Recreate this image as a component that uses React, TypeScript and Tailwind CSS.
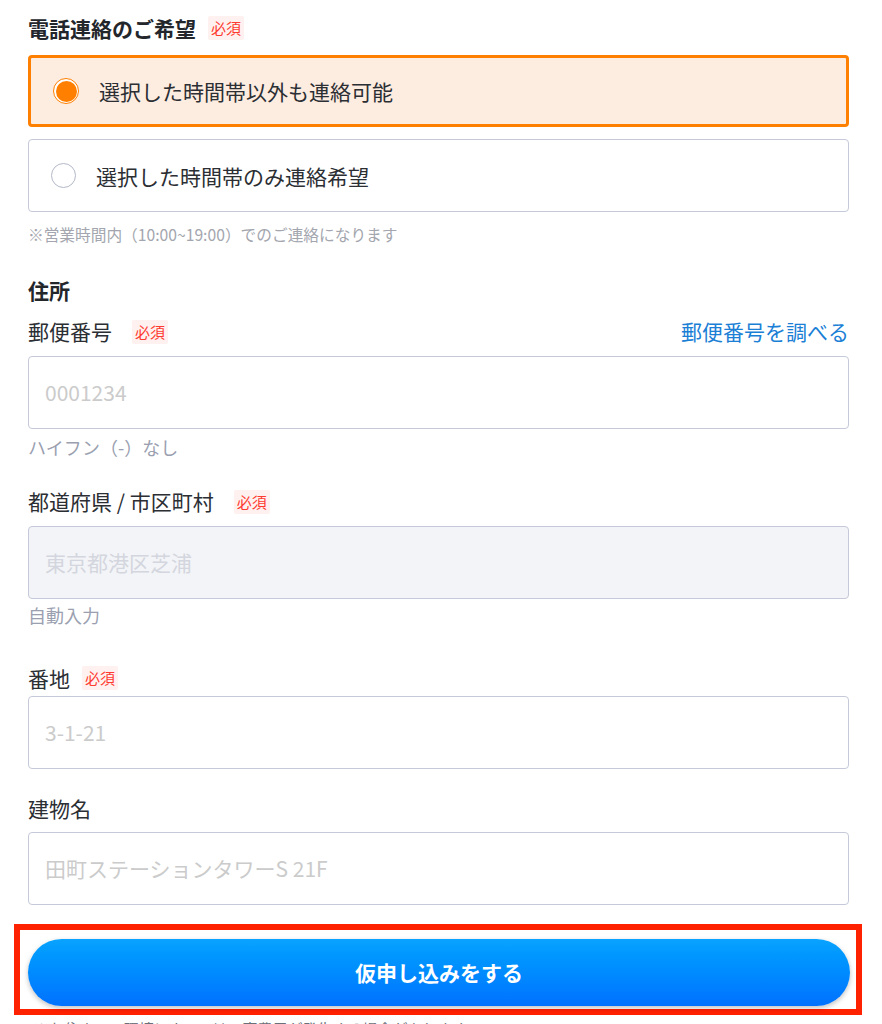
const font = "font-['Noto_Sans_CJK_JP','Noto_Sans',sans-serif]";

function Required() {
  return (
    <span className="ml-[12px] inline-block rounded-[2px] bg-[#fff1f0] px-[3px] text-[15px] leading-[24px] text-[#ff3b30]">
      必須
    </span>
  );
}

function Radio({ checked, label }: { checked: boolean; label: string }) {
  return (
    <div
      className={
        checked
          ? 'flex h-[72px] items-center rounded-[4px] border-[3px] border-[#ff8000] bg-[#fdece0] pl-[22px]'
          : 'flex h-[73px] items-center rounded-[4px] border border-[#c5c9d9] bg-white pl-[22px]'
      }
    >
      {checked ? (
        <span className="flex h-[26px] w-[26px] items-center justify-center rounded-full border-[1.5px] border-[#ff8000] bg-white">
          <span className="h-[21px] w-[21px] rounded-full bg-[#ff8000]" />
        </span>
      ) : (
        <span className="h-[25px] w-[25px] rounded-full border-[1.5px] border-[#b4b8c8] bg-white" />
      )}
      <span className="ml-[20px] text-[21px] leading-[28px] text-[#2b2e33]">{label}</span>
    </div>
  );
}

function Field({ placeholder, disabled }: { placeholder: string; disabled?: boolean }) {
  return (
    <div
      className={
        'flex h-[73px] items-center rounded-[4px] border border-[#c5c9d9] px-[16px] text-[21px] ' +
        (disabled ? 'bg-[#f3f4f7] text-[#d3d6de]' : 'bg-white text-[#cbcbcb]')
      }
    >
      {placeholder}
    </div>
  );
}

export default function App() {
  return (
    <div className={`${font} h-[1024px] overflow-hidden bg-white pl-[28px] pr-[33px] pt-[14px]`}>
      {/* 電話連絡 */}
      <div className="flex items-center">
        <h2 className="text-[21px] font-bold leading-[28px] text-[#23262b]">電話連絡のご希望</h2>
        <Required />
      </div>
      <div className="mt-[13px] flex flex-col gap-[12px]">
        <Radio checked label="選択した時間帯以外も連絡可能" />
        <Radio checked={false} label="選択した時間帯のみ連絡希望" />
      </div>
      <p className="mt-[13px] text-[15.7px] leading-[20px] text-[#a3a6ae]">
        ※営業時間内（10:00~19:00）でのご連絡になります
      </p>

      {/* 住所 */}
      <h2 className="mt-[31px] text-[21px] font-bold leading-[28px] text-[#23262b]">住所</h2>

      <div className="mt-[13px] flex items-center justify-between">
        <div className="flex items-center">
          <span className="text-[21px] leading-[28px] text-[#2b2e33]">郵便番号</span>
          <span className="ml-[8px]"><Required /></span>
        </div>
        <a className="text-[21px] leading-[28px] text-[#1b7fd6]">郵便番号を調べる</a>
      </div>
      <div className="mt-[11px]">
        <Field placeholder="0001234" />
      </div>
      <p className="mt-[8px] text-[18px] leading-[20px] text-[#9aa0b0]">ハイフン（-）なし</p>

      <div className="mt-[30px] flex items-center">
        <span className="text-[21px] leading-[28px] text-[#2b2e33]">都道府県 / 市区町村</span>
        <span className="ml-[8px]"><Required /></span>
      </div>
      <div className="mt-[11px]">
        <Field placeholder="東京都港区芝浦" disabled />
      </div>
      <p className="mt-[6px] text-[18px] leading-[20px] text-[#9aa0b0]">自動入力</p>

      <div className="mt-[39px] flex items-center">
        <span className="text-[21px] leading-[28px] text-[#2b2e33]">番地</span>
        <Required />
      </div>
      <div className="mt-[4px]">
        <Field placeholder="3-1-21" />
      </div>

      <div className="mt-[25px] flex items-center">
        <span className="text-[21px] leading-[28px] text-[#2b2e33]">建物名</span>
      </div>
      <div className="mt-[10px]">
        <Field placeholder="田町ステーションタワーS 21F" />
      </div>

      {/* 送信 */}
      <div className="-ml-[14px] -mr-[13px] mt-[19px] border-[6px] border-[#ff2200] pb-[3px] pl-[8px] pr-[6px] pt-[9px]">
        <button className="flex h-[67px] w-full items-center justify-center rounded-full bg-gradient-to-b from-[#0aa3ff] to-[#0071ff] text-[21px] font-bold text-white shadow-[0_2px_5px_rgba(0,0,0,0.25)]">
          仮申し込みをする
        </button>
      </div>
      <p className="mt-[4px] pl-[6px] text-[15px] leading-[20px] text-[#6b6f78]">
        ※お住まいの環境によっては工事費用が発生する場合があります
      </p>
    </div>
  );
}
